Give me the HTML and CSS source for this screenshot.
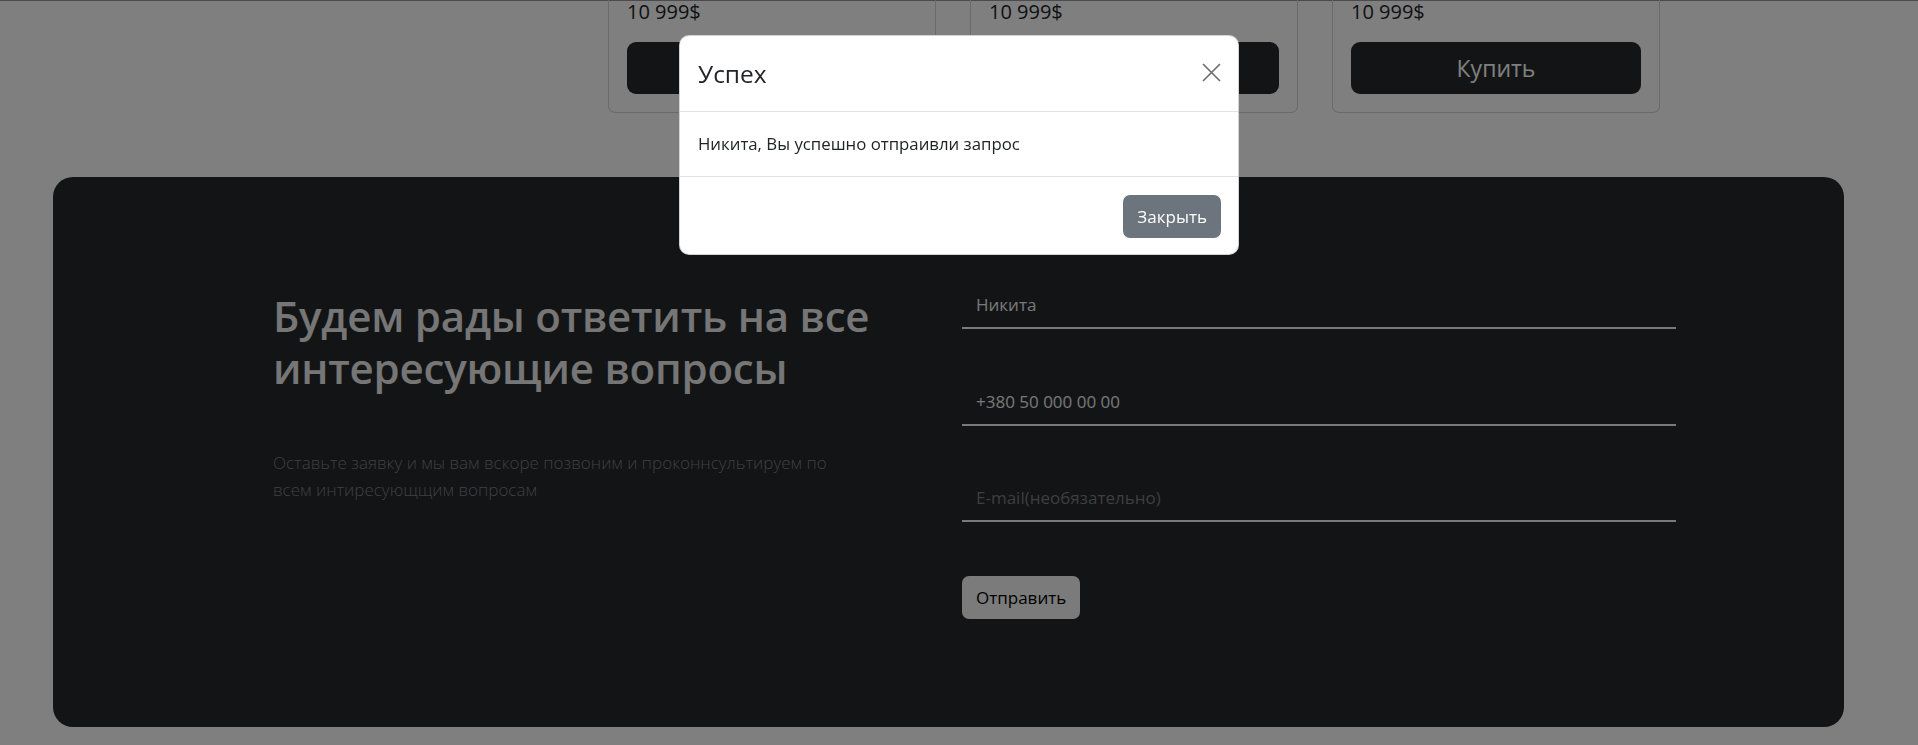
FILE: index.html
```html
<!DOCTYPE html>
<html lang="ru">
<head>
<meta charset="utf-8">
<title>Контакты</title>
<link rel="stylesheet" href="styles.css">
</head>
<body>
<div class="topline"></div>
<div class="products">
  <div class="card">
    <p class="price">10 999$</p>
    <button class="buy">Купить</button>
  </div>
  <div class="card">
    <p class="price">10 999$</p>
    <button class="buy">Купить</button>
  </div>
  <div class="card">
    <p class="price">10 999$</p>
    <button class="buy">Купить</button>
  </div>
</div>

<section class="contact">
  <div class="contact-text">
    <h2 class="contact-title">Будем рады ответить на все интересующие вопросы</h2>
    <p class="contact-sub">Оставьте заявку и мы вам вскоре позвоним и проконнсультируем по всем интиресующщим вопросам</p>
  </div>
  <form class="contact-form">
    <input class="field" type="text" value="Никита">
    <input class="field" type="text" value="+380 50 000 00 00">
    <input class="field" type="text" placeholder="E-mail(необязательно)">
    <button class="send" type="button">Отправить</button>
  </form>
</section>

<div class="backdrop"></div>
<div class="modal-wrap">
  <div class="modal">
    <div class="modal-header">
      <h5 class="modal-title">Успех</h5>
      <button class="modal-close" type="button" aria-label="Закрыть">
        <svg width="19" height="19" viewBox="0 0 19 19"><path d="M1 1 L18 18 M18 1 L1 18" stroke="#6f6f6f" stroke-width="1.7" fill="none"/></svg>
      </button>
    </div>
    <div class="modal-body">Никита, Вы успешно отпраивли запрос</div>
    <div class="modal-footer">
      <button class="btn-close-modal" type="button">Закрыть</button>
    </div>
  </div>
</div>
</body>
</html>
```
FILE: styles.css
```css
* { box-sizing: border-box; }

html, body {
  margin: 0;
  padding: 0;
}

body {
  background: #ffffff;
  font-family: "Open Sans", "Noto Sans", sans-serif;
  color: #212529;
  height: 745px;
  overflow: hidden;
}

.topline {
  height: 1px;
  background: #94949e;
}

.products {
  display: flex;
  gap: 34px;
  padding-left: 608px;
  margin-top: -1px;
}

.card {
  width: 328px;
  border: 1px solid #d4d4d4;
  border-top: none;
  border-radius: 0 0 7px 7px;
  padding: 0 18px 18px;
}

.price {
  margin: 0;
  font-size: 20px;
  line-height: 24px;
  color: #212529;
}

.buy {
  display: block;
  width: 100%;
  height: 52px;
  margin-top: 18px;
  background: #25282b;
  color: #ffffff;
  border: none;
  border-radius: 9px;
  font-family: inherit;
  font-size: 23px;
}

.contact {
  margin: 64px 0 0 53px;
  width: 1791px;
  background: #25282b;
  border-radius: 20px;
  padding: 105px 168px 108px 220px;
  display: grid;
  grid-template-columns: 600px 714px;
  column-gap: 89px;
  align-items: start;
}

.contact-title {
  margin: 8px 0 0;
  font-size: 42px;
  line-height: 52px;
  font-weight: 600;
  color: #ececec;
  letter-spacing: -0.2px;
}

.contact-sub {
  max-width: 590px;
  margin: 55px 0 0;
  font-size: 17px;
  line-height: 27px;
  font-weight: 300;
  color: #7e8084;
}

.contact-form {
  display: flex;
  flex-direction: column;
  align-items: flex-start;
}

.field {
  width: 100%;
  height: 47px;
  margin-bottom: 49.5px;
  background: transparent;
  border: none;
  border-bottom: 2px solid #f4f4f4;
  padding: 0 14px;
  font-family: inherit;
  font-size: 17px;
  color: #f0f0f0;
  outline: none;
}

.field:nth-of-type(3) {
  margin-bottom: 54px;
}

.field::placeholder {
  color: #7a7d82;
}

.send {
  height: 43px;
  padding: 0 14px;
  background: #f6f6f6;
  color: #000;
  border: none;
  border-radius: 7px;
  font-family: inherit;
  font-size: 17px;
}

.backdrop {
  position: fixed;
  inset: 0;
  background: rgba(0, 0, 0, 0.5);
}

.modal-wrap {
  position: fixed;
  inset: 0;
  display: flex;
  justify-content: center;
  align-items: flex-start;
  padding-top: 35px;
}

.modal {
  width: 560px;
  background: #ffffff;
  border: 1px solid rgba(0, 0, 0, 0.175);
  border-radius: 10px;
}

.modal-header {
  display: flex;
  align-items: center;
  justify-content: space-between;
  padding: 19px 17px 19px 18px;
  border-bottom: 1px solid #dee2e6;
}

.modal-title {
  margin: 0;
  font-size: 24.5px;
  line-height: 37px;
  font-weight: 500;
  color: #212529;
}

.modal-close {
  background: none;
  border: none;
  padding: 0;
  width: 19px;
  height: 19px;
  margin-top: -2px;
  display: flex;
}

.modal-body {
  padding: 18px;
  font-size: 16.8px;
  line-height: 28px;
  color: #212529;
}

.modal-footer {
  display: flex;
  justify-content: flex-end;
  padding: 18px 17px 16px;
  border-top: 1px solid #dee2e6;
}

.btn-close-modal {
  height: 43px;
  padding: 0 14px;
  background: #6c757d;
  color: #ffffff;
  border: none;
  border-radius: 7px;
  font-family: inherit;
  font-size: 17px;
}
```
